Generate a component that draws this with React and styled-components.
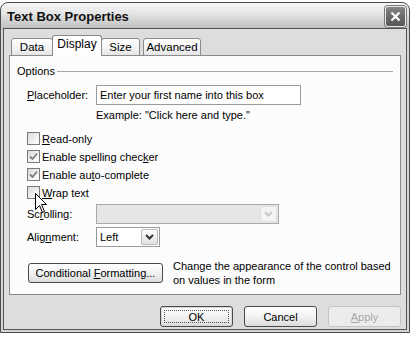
import React from "react";
import styled, { createGlobalStyle, css } from "styled-components";

const GlobalStyle = createGlobalStyle`
  html, body {
    margin: 0;
    padding: 0;
    background: #ffffff;
  }
  body {
    font-family: "Liberation Sans", Arial, sans-serif;
    font-size: 11px;
    color: #000;
  }
`;

/* window frame */

const Window = styled.div`
  box-sizing: border-box;
  width: 410px;
  height: 331px;
  margin-top: 2px;
  border: 1px solid #4c4c4c;
  border-radius: 8px 8px 0 0;
  background: linear-gradient(#f7f7f7 0px, #e6e6e6 10px, #bdbdbd 26px, #d4d4d4 27px, #d4d4d4 100%);
  display: flex;
  flex-direction: column;
`;

const TitleBar = styled.div`
  height: 25px;
  display: flex;
  align-items: center;
  justify-content: space-between;
  padding: 0 3px 0 6px;
`;

const Title = styled.div`
  font-family: "Liberation Sans", Arial, sans-serif;
  font-weight: bold;
  font-size: 13px;
  color: #111;
  margin-top: 1px;
`;

const CloseButton = styled.div`
  box-sizing: border-box;
  width: 21px;
  height: 21px;
  border-radius: 3px;
  border: 1px solid #e8e8e8;
  box-shadow: 0 0 0 1px #7a7a7a;
  background: linear-gradient(#858585, #666 60%, #585858);
  display: flex;
  align-items: center;
  justify-content: center;
  margin-top: 2px;
`;

const Client = styled.div`
  flex: 1;
  margin: 0 2px 2px;
  border: 1px solid #555;
  background: #dddddd;
  padding: 7px 5px 0;
  display: flex;
  flex-direction: column;
`;

/* tabs */

const TabStrip = styled.div`
  display: flex;
  align-items: flex-end;
  padding-left: 2px;
  height: 20px;
  position: relative;
  z-index: 1;
`;

const Tab = styled.div`
  box-sizing: border-box;
  width: ${(p) => p.$w}px;
  margin-right: ${(p) => p.$gap || 0}px;
  height: ${(p) => (p.$active ? 21 : 18)}px;
  ${(p) => p.$active && css`margin-left: -1px; margin-right: -1px;`}
  border: 1px solid #8a8a8a;
  border-bottom: ${(p) => (p.$active ? "none" : "1px solid #8a8a8a")};
  border-radius: 3px 3px 0 0;
  background: ${(p) =>
    p.$active ? "#fefefe" : "linear-gradient(#ffffff, #f2f2f2 60%, #e4e4e4)"};
  display: flex;
  align-items: center;
  justify-content: center;
  padding-bottom: ${(p) => (p.$active ? 4 : 0)}px;
  font-size: ${(p) => (p.$active ? 12 : 11.5)}px;
  position: relative;
  z-index: ${(p) => (p.$active ? 2 : 1)};
`;

const Panel = styled.div`
  box-sizing: border-box;
  height: 240px;
  margin-top: -1px;
  border: 1px solid #8a8a8a;
  background: #fcfcfc;
  padding: 9px 7px 0;
  display: flex;
  flex-direction: column;
`;

/* panel content */

const GroupHeader = styled.div`
  display: flex;
  align-items: center;
  height: 13px;
  line-height: 13px;
  gap: 2px;
`;

const Rule = styled.div`
  flex: 1;
  height: 1px;
  background: #a8a8a8;
`;

const Fields = styled.div`
  padding-left: 10px;
  display: flex;
  flex-direction: column;
`;

const FieldRow = styled.div`
  display: flex;
  align-items: center;
  margin-top: ${(p) => p.$top || 0}px;
`;

const FieldLabel = styled.div`
  width: 69px;
  line-height: 13px;
`;

const TextBox = styled.div`
  box-sizing: border-box;
  width: 205px;
  height: 20px;
  border: 1px solid #9a9a9a;
  background: #fff;
  padding-left: 3px;
  display: flex;
  align-items: center;
`;

const Hint = styled.div`
  margin: 4px 0 0 69px;
  line-height: 13px;
`;

const CheckList = styled.div`
  display: flex;
  flex-direction: column;
  gap: 5px;
  margin-top: 10px;
`;

const CheckRow = styled.div`
  display: flex;
  align-items: center;
  height: 13px;
  gap: 2px;
  position: relative;
`;

const Box = styled.div`
  box-sizing: border-box;
  width: 13px;
  height: 13px;
  border: 1px solid #7a7a7a;
  background: linear-gradient(135deg, #d9d9d9, #f2f2f2 60%, #ffffff);
  display: flex;
  align-items: center;
  justify-content: center;
`;

const Pointer = styled.svg`
  position: absolute;
  left: 8px;
  top: 7px;
`;

const Combo = styled.div`
  box-sizing: border-box;
  width: ${(p) => p.$w}px;
  height: 20px;
  border: 1px solid ${(p) => (p.$disabled ? "#a9a9a9" : "#9a9a9a")};
  background: ${(p) => (p.$disabled ? "#e6e6e6" : "#fff")};
  display: flex;
  align-items: center;
  justify-content: space-between;
  padding: 1px 1px 1px 3px;
`;

const DropButton = styled.div`
  box-sizing: border-box;
  width: 17px;
  height: 16px;
  border: 1px solid ${(p) => (p.$disabled ? "#e0e0e0" : "#b9b9b9")};
  border-radius: 2px;
  background: ${(p) =>
    p.$disabled ? "#f4f4f4" : "linear-gradient(#fdfdfd, #e2e2e2)"};
  display: flex;
  align-items: center;
  justify-content: center;
`;

const ActionRow = styled.div`
  display: flex;
  align-items: center;
  gap: 10px;
  margin: 12px 0 0 1px;
`;

const Description = styled.div`
  line-height: 14px;
`;

const Button = styled.div`
  box-sizing: border-box;
  width: ${(p) => p.$w}px;
  height: ${(p) => p.$h || 21}px;
  border: 1px solid ${(p) => (p.$disabled ? "#c4c4c4" : "#4a4a4a")};
  border-radius: 3px;
  background: ${(p) =>
    p.$disabled ? "#ececec" : "linear-gradient(#ffffff, #f2f2f2 50%, #dcdcdc)"};
  color: ${(p) => (p.$disabled ? "#a8a8a8" : "#000")};
  display: flex;
  align-items: center;
  justify-content: center;
  white-space: pre;
  position: relative;
  ${(p) =>
    p.$focused &&
    css`
      box-shadow: inset 0 0 0 1px #d8d8d8;
      &::after {
        content: "";
        position: absolute;
        inset: 3px;
        border: 1px dotted #555;
      }
    `}
`;

const ButtonBar = styled.div`
  display: flex;
  justify-content: flex-end;
  gap: 11px;
  margin-top: 11px;
`;

const Check = () => (
  <svg width="9" height="9" viewBox="0 0 9 9">
    <polyline points="1,4.5 3.5,7 8,1.5" fill="none" stroke="#7c7c7c" strokeWidth="1.8" />
  </svg>
);

const Chevron = ({ color }) => (
  <svg width="9" height="6" viewBox="0 0 9 6">
    <polyline points="1,1 4.5,4.5 8,1" fill="none" stroke={color} strokeWidth="2" />
  </svg>
);

const CheckItem = ({ checked, children, pointer }) => (
  <CheckRow>
    <Box>{checked && <Check />}</Box>
    <span>{children}</span>
    {pointer && (
      <Pointer width="13" height="21" viewBox="0 0 13 21">
        <path
          d="M0.5 0.5 L0.5 16.5 L4.5 12.5 L7.5 19.5 L9.5 18.5 L6.5 11.5 L11.5 11.5 Z"
          fill="#fff"
          stroke="#000"
          strokeWidth="1"
        />
      </Pointer>
    )}
  </CheckRow>
);

export default function App() {
  return (
    <>
      <GlobalStyle />
      <Window>
        <TitleBar>
          <Title>Text Box Properties</Title>
          <CloseButton>
            <svg width="11" height="11" viewBox="0 0 11 11">
              <path d="M1.5 1.5 L9.5 9.5 M9.5 1.5 L1.5 9.5" stroke="#fff" strokeWidth="2.2" />
            </svg>
          </CloseButton>
        </TitleBar>
        <Client>
          <TabStrip>
            <Tab $w={42}>Data</Tab>
            <Tab $w={50} $active>Display</Tab>
            <Tab $w={39} $gap={3}>Size</Tab>
            <Tab $w={58}>Advanced</Tab>
          </TabStrip>
          <Panel>
            <GroupHeader>
              <span>Options</span>
              <Rule />
            </GroupHeader>
            <Fields>
              <FieldRow $top={7}>
                <FieldLabel><u>P</u>laceholder:</FieldLabel>
                <TextBox>Enter your first name into this box</TextBox>
              </FieldRow>
              <Hint>Example: "Click here and type."</Hint>
              <CheckList>
                <CheckItem><u>R</u>ead-only</CheckItem>
                <CheckItem checked>Enable spelling chec<u>k</u>er</CheckItem>
                <CheckItem checked>Enable au<u>t</u>o-complete</CheckItem>
                <CheckItem pointer><u>W</u>rap text</CheckItem>
              </CheckList>
              <FieldRow $top={5}>
                <FieldLabel>Sc<u>r</u>olling:</FieldLabel>
                <Combo $w={183} $disabled>
                  <span />
                  <DropButton $disabled>
                    <Chevron color="#c8c8c8" />
                  </DropButton>
                </Combo>
              </FieldRow>
              <FieldRow $top={3}>
                <FieldLabel>Alig<u>n</u>ment:</FieldLabel>
                <Combo $w={64}>
                  <span>Left</span>
                  <DropButton>
                    <Chevron color="#333" />
                  </DropButton>
                </Combo>
              </FieldRow>
              <ActionRow>
                <Button $w={135} $h={20}>
                  {"Conditional "}<u>F</u>ormatting...
                </Button>
                <Description>
                  Change the appearance of the control based
                  <br />
                  on values in the form
                </Description>
              </ActionRow>
            </Fields>
          </Panel>
          <ButtonBar>
            <Button $w={73} $focused>OK</Button>
            <Button $w={73}>Cancel</Button>
            <Button $w={73} $disabled><u>A</u>pply</Button>
          </ButtonBar>
        </Client>
      </Window>
    </>
  );
}
